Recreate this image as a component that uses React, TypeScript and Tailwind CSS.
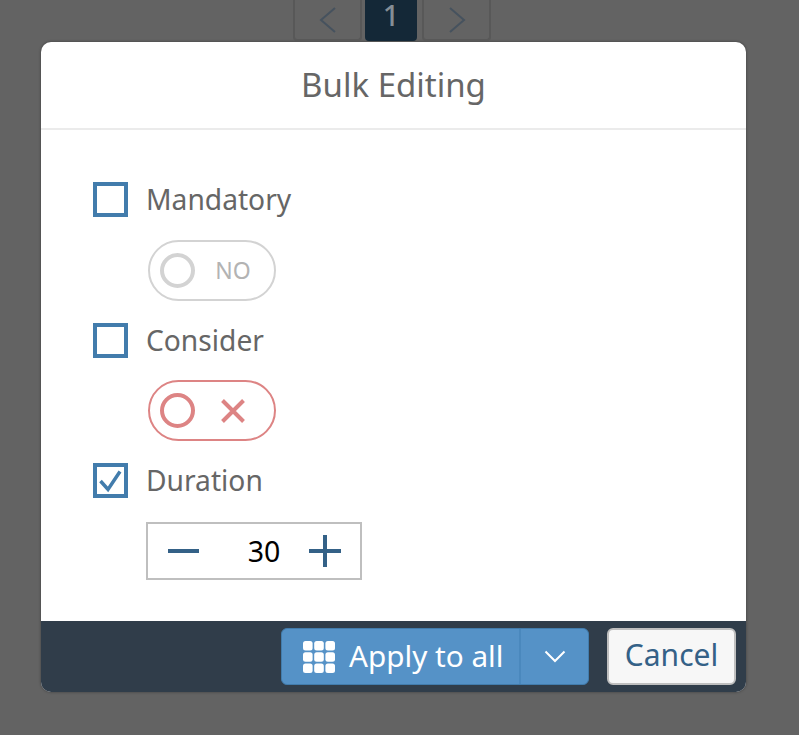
import React from "react";

const font = { fontFamily: '"Noto Sans", "Open Sans", sans-serif' };

function Checkbox({ checked }: { checked?: boolean }) {
  return (
    <div className="w-[35px] h-[35px] border-[4px] border-[#427cac] bg-white flex items-center justify-center shrink-0">
      {checked && (
        <svg width="27" height="27" viewBox="0 0 27 27" fill="none">
          <path d="M3.5 14 L11 22.5 L23 4.5" stroke="#427cac" strokeWidth="3.5" />
        </svg>
      )}
    </div>
  );
}

function Toggle({ color, gap, children }: { color: string; gap: string; children: React.ReactNode }) {
  return (
    <div
      className={`ml-[55px] ${gap} w-[128px] h-[61px] rounded-full border-2 flex items-center pl-[10px]`}
      style={{ borderColor: color }}
    >
      <div className="w-[35px] h-[35px] rounded-full border-[4px] shrink-0" style={{ borderColor: color }} />
      <div className="flex-1 flex justify-center pr-[3px]">{children}</div>
    </div>
  );
}

function Label({ children }: { children: React.ReactNode }) {
  return <span className="text-[28.2px] leading-[35px] text-[#666666] ml-[18px]">{children}</span>;
}

export default function App() {
  return (
    <div className="w-[799px] h-[735px] bg-[#636363] overflow-hidden" style={font}>
      <div className="h-[42px] flex justify-center gap-[3px] pr-[15px]">
        <div className="w-[69px] h-[41px] border-x-2 border-b-2 border-[#585858] rounded-b-[4px] flex items-center justify-center">
          <svg width="20" height="28" viewBox="0 0 20 28" fill="none">
            <path d="M17 2 L3 14 L17 26" stroke="#46525e" strokeWidth="2" />
          </svg>
        </div>
        <div className="w-[52px] h-[41px] bg-[#142837] rounded-b-[4px] flex justify-center text-[29px] leading-[29px] text-[#858e96] font-medium">
          1
        </div>
        <div className="w-[69px] h-[41px] ml-[2px] border-x-2 border-b-2 border-[#585858] rounded-b-[4px] flex items-center justify-center">
          <svg width="20" height="28" viewBox="0 0 20 28" fill="none">
            <path d="M3 2 L17 14 L3 26" stroke="#46525e" strokeWidth="2" />
          </svg>
        </div>
      </div>

      <div className="ml-[41px] w-[705px] h-[650px] rounded-[10px] overflow-hidden bg-white flex flex-col shadow-[0_0_3px_rgba(0,0,0,0.4)]">
        <div className="h-[88px] border-b-2 border-[#ebebeb] flex items-center justify-center text-[33px] text-[#666666] shrink-0">
          Bulk Editing
        </div>

        <div className="flex-1 pl-[52px] pt-[52px]">
          <div className="flex items-center">
            <Checkbox />
            <Label>Mandatory</Label>
          </div>
          <Toggle color="#d3d3d3" gap="mt-[23px]">
            <span className="text-[23px] leading-none text-[#b3b3b3]">NO</span>
          </Toggle>

          <div className="flex items-center mt-[22px]">
            <Checkbox />
            <Label>Consider</Label>
          </div>
          <Toggle color="#dd8484" gap="mt-[22px]">
            <svg width="24" height="24" viewBox="0 0 24 24" fill="none">
              <path d="M1.5 1.5 L22.5 22.5 M22.5 1.5 L1.5 22.5" stroke="#dd8484" strokeWidth="4" />
            </svg>
          </Toggle>

          <div className="flex items-center mt-[22px]">
            <Checkbox checked />
            <Label>Duration</Label>
          </div>
          <div className="ml-[53px] mt-[24px] w-[216px] h-[58px] border-2 border-[#bfbfbf] flex items-center justify-between pl-[20px] pr-[19px]">
            <svg width="31" height="4" viewBox="0 0 31 4">
              <rect width="31" height="4" fill="#346187" />
            </svg>
            <span className="text-[28.5px] leading-none text-black ml-[20px]">30</span>
            <svg width="32" height="32" viewBox="0 0 32 32">
              <path d="M0 16 H32 M16 0 V32" stroke="#346187" strokeWidth="4" />
            </svg>
          </div>
        </div>

        <div className="h-[71px] bg-[#303d4a] shrink-0 flex justify-end pt-[7px] pr-[10px] gap-[18px]">
          <div className="w-[308px] h-[57px] rounded-[6px] bg-[#5592c7] border border-[#427cac] flex text-white">
            <div className="w-[239px] border-r-2 border-[#4a88bd] flex items-center pl-[21px] gap-[14px] pb-[2px]">
              <svg width="32" height="32" viewBox="0 0 32 32" fill="white" className="mt-[2px]">
                {[0, 11.2, 22.4].flatMap((y) =>
                  [0, 11.2, 22.4].map((x) => (
                    <rect key={`${x}-${y}`} x={x} y={y} width="9.6" height="9.6" rx="2.5" />
                  ))
                )}
              </svg>
              <span className="text-[29.7px] leading-none">Apply to all</span>
            </div>
            <div className="flex-1 flex items-center justify-center">
              <svg width="22" height="13" viewBox="0 0 22 13" fill="none">
                <path d="M1.5 1.5 L11 11 L20.5 1.5" stroke="white" strokeWidth="2" />
              </svg>
            </div>
          </div>
          <div className="w-[129px] h-[57px] rounded-[6px] bg-[#f7f7f7] border-2 border-[#bfbfbf] flex items-center justify-center text-[30px] leading-none pb-[3px] text-[#346187]">
            Cancel
          </div>
        </div>
      </div>
    </div>
  );
}
